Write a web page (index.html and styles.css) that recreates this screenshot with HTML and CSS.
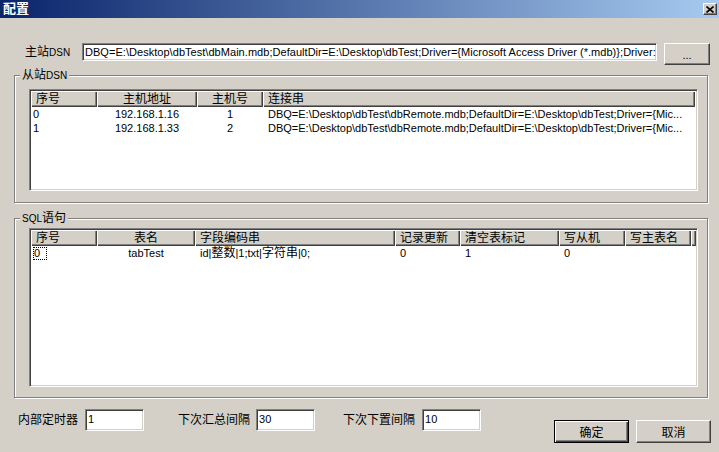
FILE: index.html
```html
<!DOCTYPE html>
<html lang="zh-CN">
<head>
    <meta charset="UTF-8">
    <title>配置</title>
    <link rel="stylesheet" href="styles.css">
</head>
<body>
    <div class="window">
        <div class="titlebar">
            <span class="title">配置</span>
            <span class="close-btn">
                <svg width="8" height="7" viewBox="0 0 8 7">
                    <path d="M0.5 0.5 L7.5 6.5 M7.5 0.5 L0.5 6.5" stroke="#000" stroke-width="1.6" fill="none"/>
                </svg>
            </span>
        </div>

        <div class="dsn-row">
            <label class="dsn-label">主站<span class="en">DSN</span></label>
            <div class="textbox main-dsn">DBQ=E:\Desktop\dbTest\dbMain.mdb;DefaultDir=E:\Desktop\dbTest;Driver={Microsoft Access Driver (*.mdb)};Driver:</div>
            <button class="btn browse-btn">...</button>
        </div>

        <fieldset class="group group-remote">
            <legend>从站<span class="en">DSN</span></legend>
            <div class="listview list-remote">
                <div class="lv-head cols-remote">
                    <div class="lv-col">序号</div>
                    <div class="lv-col center">主机地址</div>
                    <div class="lv-col center">主机号</div>
                    <div class="lv-col">连接串</div>
                </div>
                <div class="lv-row cols-remote">
                    <div class="cell first">0</div>
                    <div class="cell center">192.168.1.16</div>
                    <div class="cell center">1</div>
                    <div class="cell">DBQ=E:\Desktop\dbTest\dbRemote.mdb;DefaultDir=E:\Desktop\dbTest;Driver={Mic...</div>
                </div>
                <div class="lv-row cols-remote">
                    <div class="cell first">1</div>
                    <div class="cell center">192.168.1.33</div>
                    <div class="cell center">2</div>
                    <div class="cell">DBQ=E:\Desktop\dbTest\dbRemote.mdb;DefaultDir=E:\Desktop\dbTest;Driver={Mic...</div>
                </div>
            </div>
        </fieldset>

        <fieldset class="group group-sql">
            <legend><span class="en">SQL</span>语句</legend>
            <div class="listview list-sql">
                <div class="lv-head cols-sql">
                    <div class="lv-col">序号</div>
                    <div class="lv-col center">表名</div>
                    <div class="lv-col">字段编码串</div>
                    <div class="lv-col">记录更新</div>
                    <div class="lv-col">清空表标记</div>
                    <div class="lv-col">写从机</div>
                    <div class="lv-col">写主表名</div>
                    <div class="lv-col"></div>
                </div>
                <div class="lv-row cols-sql">
                    <div class="cell first"><span class="focus">0</span></div>
                    <div class="cell center">tabTest</div>
                    <div class="cell">id|<span class="zh">整数</span>|1;txt|<span class="zh">字符串</span>|0;</div>
                    <div class="cell">0</div>
                    <div class="cell">1</div>
                    <div class="cell">0</div>
                    <div class="cell"></div>
                    <div class="cell"></div>
                </div>
            </div>
        </fieldset>

        <div class="bottom-row">
            <label class="field-label">内部定时器</label>
            <div class="textbox small-input">1</div>
            <label class="field-label gap-wide">下次汇总间隔</label>
            <div class="textbox small-input">30</div>
            <label class="field-label gap-mid">下次下置间隔</label>
            <div class="textbox small-input">10</div>
            <button class="btn dialog-btn default-btn">确定</button>
            <button class="btn dialog-btn">取消</button>
        </div>
    </div>
</body>
</html>
```

FILE: styles.css
```css
body {
    margin: 0;
    background: #d4d0c8;
    font-family: "Liberation Sans", "Noto Sans CJK SC", sans-serif;
    font-size: 11px;
    color: #000;
}

.window {
    width: 719px;
    height: 452px;
    overflow: hidden;
}

.en {
    font-size: 10px;
}

.zh {
    font-size: 12px;
}

/* 标题栏 */
.titlebar {
    height: 18px;
    display: flex;
    align-items: center;
    justify-content: space-between;
    padding-left: 3px;
    background: linear-gradient(to right, #0a246a, #a6caf0);
}

.title {
    color: #fff;
    font-size: 13px;
    font-weight: bold;
    line-height: 14px;
}

.close-btn {
    width: 14px;
    height: 12px;
    margin-right: 2px;
    box-sizing: border-box;
    display: flex;
    align-items: center;
    justify-content: center;
    background: #d4d0c8;
    border: 1px solid;
    border-color: #fff #404040 #404040 #fff;
    box-shadow: inset -1px -1px #808080;
}

/* 输入框和按钮 */
.textbox {
    box-sizing: border-box;
    background: #fff;
    border: 1px solid;
    border-color: #808080 #fff #fff #808080;
    box-shadow: inset 1px 1px #404040, inset -1px -1px #d4d0c8;
    padding: 0 2px;
    white-space: nowrap;
    overflow: hidden;
}

.btn {
    box-sizing: border-box;
    background: #d4d0c8;
    border: 1px solid;
    border-color: #fff #404040 #404040 #fff;
    box-shadow: inset -1px -1px #808080;
    padding: 0;
    font-family: "Liberation Sans", "Noto Sans CJK SC", sans-serif;
    font-size: 12px;
    color: #000;
}

.dsn-row {
    display: flex;
    margin-top: 25px;
    height: 22px;
}

.dsn-label {
    margin-left: 25px;
    width: 57px;
    font-size: 12px;
    line-height: 18px;
}

.main-dsn {
    width: 575px;
    height: 18px;
    line-height: 16px;
    padding-right: 0;
    letter-spacing: 0.04px;
}

.browse-btn {
    width: 46px;
    height: 22px;
    margin-left: 7px;
    font-size: 11px;
    padding-top: 2px;
}

/* 分组框 */
.group {
    box-sizing: border-box;
    width: 694px;
    min-width: 0;
    margin: 3px 0 0 14px;
    padding: 0;
    border: 1px solid #808080;
    box-shadow: inset 1px 1px #fff, 1px 1px #fff;
}

.group legend {
    margin-left: 5px;
    padding: 0 2px;
    font-size: 12px;
    line-height: 14px;
    background: #d4d0c8;
}

.group-sql {
    margin-top: 8px;
}

/* 列表 */
.listview {
    box-sizing: border-box;
    background: #fff;
    border: 1px solid;
    border-color: #808080 #fff #fff #808080;
    box-shadow: inset 1px 1px #404040, inset -1px -1px #d4d0c8;
    padding: 1px;
    overflow: hidden;
}

.list-remote {
    height: 102px;
    margin: 6px 9px 11px 14px;
}

.list-sql {
    height: 159px;
    margin: 2px 9px 10px 14px;
}

.cols-remote {
    display: grid;
    grid-template-columns: 66px 100px 66px 432px;
}

.cols-sql {
    display: grid;
    grid-template-columns: 66px 98px 200px 65px 99px 66px 66px 4px;
}

.lv-col {
    height: 16px;
    padding-left: 5px;
    font-size: 12px;
    line-height: 16px;
    background: #d4d0c8;
    box-shadow: inset 1px 1px #fff, inset -1px -1px #404040, inset -2px -2px #808080;
    white-space: nowrap;
    overflow: hidden;
}

.lv-row .cell {
    height: 14px;
    line-height: 14px;
    padding-left: 5px;
    white-space: nowrap;
    overflow: hidden;
}

.lv-col.center,
.lv-row .cell.center {
    padding-left: 0;
    text-align: center;
}

.lv-row .cell.first {
    padding-left: 2px;
}

.focus {
    display: inline-block;
    height: 13px;
    line-height: 13px;
    padding: 0 7px 0 1px;
    outline: 1px dotted #000;
    outline-offset: -1px;
}

/* 底部 */
.bottom-row {
    display: flex;
    align-items: flex-start;
    margin-top: 11px;
}

.field-label {
    margin-left: 18px;
    margin-right: 7px;
    font-size: 12px;
    line-height: 22px;
}

.field-label.gap-wide {
    margin-left: 34px;
    margin-right: 6px;
}

.field-label.gap-mid {
    margin-left: 28px;
}

.small-input {
    width: 59px;
    height: 22px;
    line-height: 18px;
}

.dialog-btn {
    width: 75px;
    height: 23px;
    margin-top: 11px;
    margin-left: 7px;
}

.default-btn {
    margin-left: 73px;
    border: 1px solid #000;
    box-shadow: inset 1px 1px #fff, inset -1px -1px #404040, inset -2px -2px #808080;
}
```
